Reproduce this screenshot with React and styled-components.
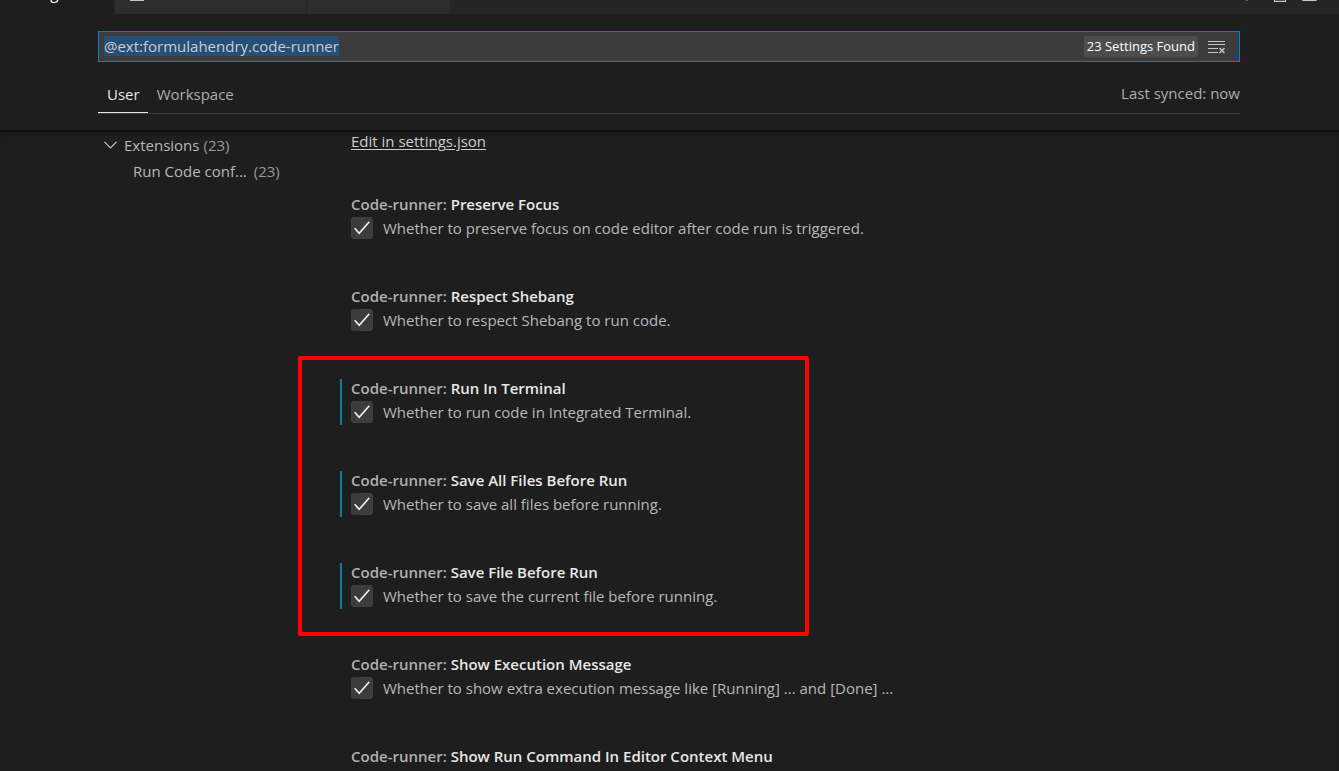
import React, { useEffect, useRef } from "react";
import styled, { createGlobalStyle } from "styled-components";

const GlobalStyle = createGlobalStyle`
  * { box-sizing: border-box; }
  html, body { margin: 0; background: #1e1e1e; }
  body {
    color: #cccccc;
    font-family: "Open Sans", "Noto Sans", sans-serif;
    font-size: 15px;
  }
  button, input { font: inherit; color: inherit; }
`;

const Page = styled.div`
  height: 100vh;
  overflow: hidden;
  display: flex;
  flex-direction: column;
`;

const TopBar = styled.div`
  height: 14px;
  flex: none;
  overflow: hidden;
  display: flex;
  align-items: flex-end;
  background: #252526;
`;

const EditorTab = styled.button`
  flex: none;
  height: 42px;
  width: ${(p) => p.$width}px;
  padding: 0 14px 0 ${(p) => (p.$active ? 10 : 14)}px;
  display: flex;
  align-items: center;
  border: 0;
  border-right: 1px solid #252526;
  background: ${(p) => (p.$active ? "#1e1e1e" : "#2d2d2d")};
  color: #ffffff;
`;

const Actions = styled.div`
  height: 42px;
  margin-left: auto;
  padding-right: 21px;
  display: flex;
  align-items: center;
  gap: 12px;
`;

const ActionButton = styled.button`
  width: 18px;
  height: 20px;
  padding: 0;
  border: 0;
  background: none;
  svg { display: block; }
`;

const Header = styled.header`
  flex: none;
  padding: 17px 99px 16px 98px;
`;

const SearchBox = styled.div`
  height: 31px;
  display: flex;
  align-items: center;
  padding: 0 13px 0 5px;
  background: #3c3c3c;
  border: 1px solid #007fd4;
`;

const SearchInput = styled.input`
  flex: 1;
  min-width: 0;
  height: 24px;
  padding: 0 0 2px;
  border: 0;
  outline: 0;
  background: none;
  line-height: 22px;
  &::selection { background: #264f78; color: #cccccc; }
`;

const CountBadge = styled.span`
  padding: 0 3px;
  border-radius: 2px;
  background: #4d4d4d;
  color: #ffffff;
  font-size: 13px;
  line-height: 21px;
`;

const ClearButton = styled.button`
  margin-left: 10px;
  padding: 0;
  border: 0;
  background: none;
  svg { display: block; }
`;

const ScopeBar = styled.nav`
  display: flex;
  align-items: flex-end;
  margin-top: 16px;
  height: 36px;
  border-bottom: 1px solid #3a3a3a;
`;

const ScopeTab = styled.button`
  height: 35px;
  padding: 0 8px 3px 9px;
  border: 0;
  border-bottom: 1px solid ${(p) => (p.$active ? "#e7e7e7" : "transparent")};
  background: none;
  line-height: 28px;
  color: ${(p) => (p.$active ? "#e7e7e7" : "#adadad")};
`;

const SyncStatus = styled.span`
  margin-left: auto;
  line-height: 40px;
  color: #adadad;
`;

const Body = styled.div`
  flex: 1;
  min-height: 0;
  overflow: hidden;
  display: flex;
  padding: 0 99px 0 98px;
  box-shadow: inset 0 5px 4px -3px rgba(0, 0, 0, 0.6);
`;

const Toc = styled.nav`
  flex: none;
  width: 242px;
  padding-top: 2px;
`;

const TocRow = styled.div`
  display: flex;
  align-items: center;
  height: 26px;
  padding-left: ${(p) => (p.$nested ? 35 : 5)}px;
  color: #b8b8b8;
  svg { flex: none; margin-right: 6px; }
`;

const TocCount = styled.span`
  margin-left: ${(p) => (p.$nested ? 7 : 4)}px;
  color: #989898;
`;

const List = styled.main`
  flex: 1;
  min-width: 0;
`;

const JsonLink = styled.a`
  display: block;
  width: max-content;
  margin: 0 0 43px 11px;
  color: #cccccc;
  line-height: 22px;
  text-decoration: underline;
  text-underline-offset: 2px;
`;

const Setting = styled.section`
  height: 46px;
  margin-bottom: 46px;
  padding-left: 9px;
  border-left: 2px solid ${(p) => (p.$modified ? "#0c7d9d" : "transparent")};
`;

const SettingTitle = styled.h2`
  margin: 0 0 4px;
  font-size: 15px;
  font-weight: 600;
  line-height: 18px;
  white-space: nowrap;
  color: #e7e7e7;
`;

const Category = styled.span`
  color: #b0b0b0;
`;

const SettingLabel = styled.label`
  display: flex;
  align-items: center;
  gap: 10px;
  height: 22px;
  line-height: 20px;
  white-space: nowrap;
  color: #b8b8b8;
`;

const CheckWrap = styled.span`
  display: grid;
  flex: none;
  width: 22px;
  height: 22px;
  > * { grid-area: 1 / 1; }
  svg { pointer-events: none; }
`;

const Checkbox = styled.input`
  appearance: none;
  width: 22px;
  height: 22px;
  margin: 0;
  border: 1px solid #404040;
  border-radius: 3px;
  background: #3c3c3c;
  &:not(:checked) + svg { visibility: hidden; }
`;

const Highlighted = styled.div`
  position: relative;
`;

const Marker = styled.div`
  position: absolute;
  top: -23px;
  bottom: -27px;
  left: -42px;
  width: 511px;
  border: 4px solid #ff0000;
  border-radius: 2px;
  pointer-events: none;
`;

function CheckSetting({ name, text, modified }) {
  return (
    <Setting $modified={modified}>
      <SettingTitle>
        <Category>Code-runner:</Category> {name}
      </SettingTitle>
      {text && (
        <SettingLabel>
          <CheckWrap>
            <Checkbox type="checkbox" defaultChecked />
            <svg width="22" height="22" viewBox="0 0 22 22" fill="none">
              <path d="M3.7 11.3 L8.2 16.4 L18.3 4.8" stroke="#f0f0f0" strokeWidth="1.6" />
            </svg>
          </CheckWrap>
          {text}
        </SettingLabel>
      )}
    </Setting>
  );
}

export default function App() {
  const search = useRef(null);
  useEffect(() => {
    search.current.focus();
    search.current.select();
  }, []);

  return (
    <Page>
      <GlobalStyle />
      <TopBar>
        <EditorTab $active $width={115}>Settings</EditorTab>
        <EditorTab $width={192} aria-label="Open file">
          <svg width="16" height="20" viewBox="0 0 16 20" fill="none">
            <path d="M2 3 H14 V17 H2 Z" stroke="#c5c5c5" strokeWidth="2" />
          </svg>
        </EditorTab>
        <EditorTab $width={144} aria-label="Second file" />
        <Actions>
          <ActionButton aria-label="Open settings file">
            <svg width="18" height="20" viewBox="0 0 18 20" fill="none">
              <path d="M3 4 L7 18" stroke="#8a8a8a" strokeWidth="1.5" />
            </svg>
          </ActionButton>
          <ActionButton aria-label="Split editor">
            <svg width="18" height="20" viewBox="0 0 18 20" fill="none">
              <path d="M4.5 4 V18.3 H15.5 V4 Z" stroke="#c5c5c5" strokeWidth="1.3" />
            </svg>
          </ActionButton>
          <ActionButton aria-label="Editor layout">
            <svg width="18" height="20" viewBox="0 0 18 20" fill="none">
              <path d="M3 4 V17.4 H16 V4 Z" stroke="#c5c5c5" strokeWidth="1.3" />
            </svg>
          </ActionButton>
        </Actions>
      </TopBar>

      <Header>
        <SearchBox>
          <SearchInput
            ref={search}
            aria-label="Search settings"
            defaultValue="@ext:formulahendry.code-runner"
            spellCheck={false}
          />
          <CountBadge>23 Settings Found</CountBadge>
          <ClearButton aria-label="Clear settings search">
            <svg width="18" height="14" viewBox="0 0 18 14" fill="none" stroke="#c5c5c5">
              <path d="M0 1.5 H17 M0 4.5 H17 M0 8.5 H10 M0 12.5 H10" strokeWidth="1.1" />
              <path d="M11.5 8 L16.5 13 M16.5 8 L11.5 13" strokeWidth="1.5" />
            </svg>
          </ClearButton>
        </SearchBox>
        <ScopeBar>
          <ScopeTab $active>User</ScopeTab>
          <ScopeTab>Workspace</ScopeTab>
          <SyncStatus>Last synced: now</SyncStatus>
        </ScopeBar>
      </Header>

      <Body>
        <Toc aria-label="Settings groups">
          <TocRow>
            <svg width="15" height="10" viewBox="0 0 15 10" fill="none">
              <path d="M1.5 1.8 L7.5 7.8 L13.5 1.8" stroke="#c5c5c5" strokeWidth="1.2" />
            </svg>
            Extensions<TocCount>(23)</TocCount>
          </TocRow>
          <TocRow $nested>
            Run Code conf...<TocCount $nested>(23)</TocCount>
          </TocRow>
        </Toc>
        <List>
          <JsonLink href="#settings-json">Edit in settings.json</JsonLink>
          <CheckSetting
            name="Preserve Focus"
            text="Whether to preserve focus on code editor after code run is triggered."
          />
          <CheckSetting name="Respect Shebang" text="Whether to respect Shebang to run code." />
          <Highlighted>
            <CheckSetting modified name="Run In Terminal" text="Whether to run code in Integrated Terminal." />
            <CheckSetting modified name="Save All Files Before Run" text="Whether to save all files before running." />
            <CheckSetting modified name="Save File Before Run" text="Whether to save the current file before running." />
            <Marker />
          </Highlighted>
          <CheckSetting
            name="Show Execution Message"
            text="Whether to show extra execution message like [Running] ... and [Done] ..."
          />
          <CheckSetting name="Show Run Command In Editor Context Menu" />
        </List>
      </Body>
    </Page>
  );
}
